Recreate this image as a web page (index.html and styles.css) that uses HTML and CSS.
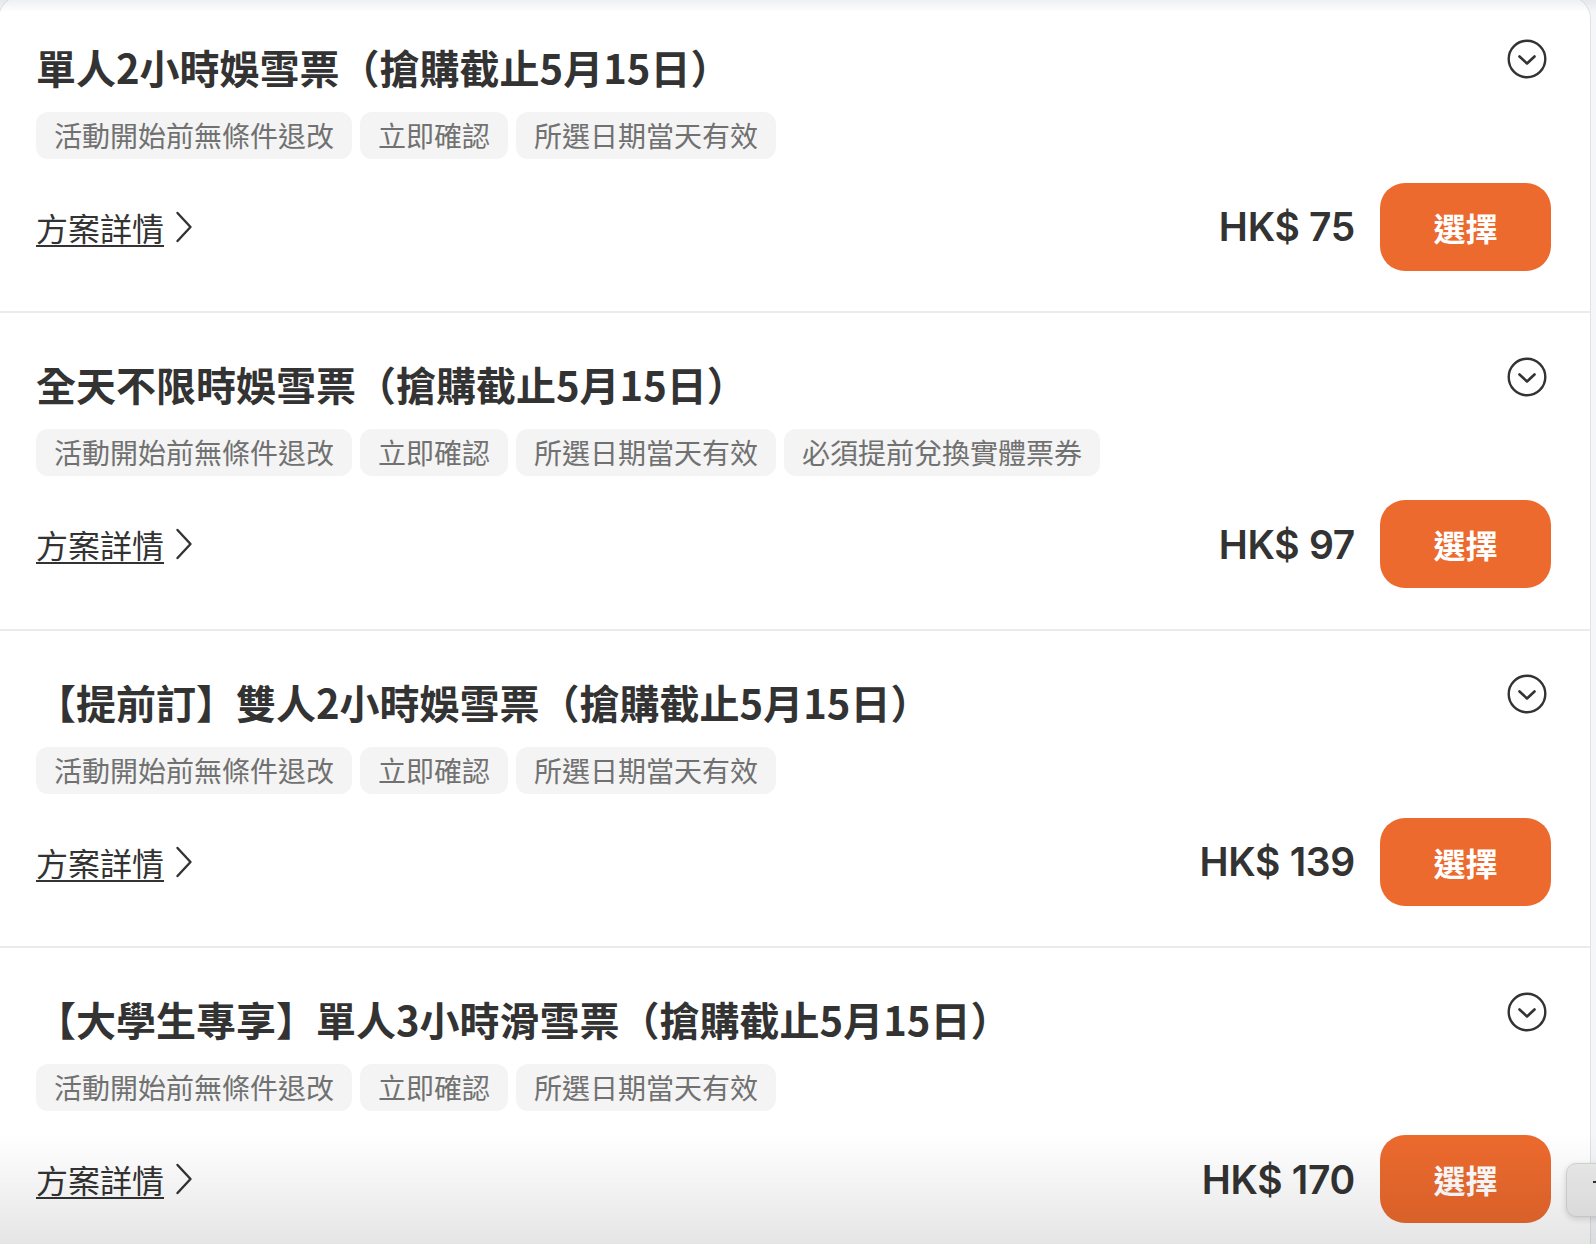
FILE: index.html
```html
<!DOCTYPE html>
<html lang="zh-Hant">
<head>
<meta charset="utf-8">
<title>方案</title>
<link rel="stylesheet" href="styles.css">
</head>
<body>
<div class="top-shade"></div>
<div class="card">
  <div class="pkg">
    <div class="pkg-head">
      <h2 class="pkg-title">單人2小時娛雪票（搶購截止5月15日）</h2>
      <svg class="pkg-toggle" viewBox="0 0 40 40" width="40" height="40"><circle cx="20" cy="20" r="18.3" fill="none" stroke="#333" stroke-width="2.4"/><path d="M12.5 17.5 L20 24.5 L27.5 17.5" fill="none" stroke="#333" stroke-width="2.6" stroke-linecap="round" stroke-linejoin="round"/></svg>
    </div>
    <div class="tags">
      <span class="tag">活動開始前無條件退改</span>
      <span class="tag">立即確認</span>
      <span class="tag">所選日期當天有效</span>
    </div>
    <div class="pkg-foot">
      <a class="details" href="#"><span class="details-text">方案詳情</span><svg class="details-arrow" viewBox="0 0 20 32" width="20" height="32"><path d="M3.5 2 L16.5 16 L3.5 30" fill="none" stroke="#333" stroke-width="2.4" stroke-linecap="round" stroke-linejoin="round"/></svg></a>
      <div class="buy">
        <span class="price">HK$ 75</span>
        <button class="select">選擇</button>
      </div>
    </div>
  </div>

  <div class="pkg">
    <div class="pkg-head">
      <h2 class="pkg-title">全天不限時娛雪票（搶購截止5月15日）</h2>
      <svg class="pkg-toggle" viewBox="0 0 40 40" width="40" height="40"><circle cx="20" cy="20" r="18.3" fill="none" stroke="#333" stroke-width="2.4"/><path d="M12.5 17.5 L20 24.5 L27.5 17.5" fill="none" stroke="#333" stroke-width="2.6" stroke-linecap="round" stroke-linejoin="round"/></svg>
    </div>
    <div class="tags">
      <span class="tag">活動開始前無條件退改</span>
      <span class="tag">立即確認</span>
      <span class="tag">所選日期當天有效</span>
      <span class="tag">必須提前兌換實體票券</span>
    </div>
    <div class="pkg-foot">
      <a class="details" href="#"><span class="details-text">方案詳情</span><svg class="details-arrow" viewBox="0 0 20 32" width="20" height="32"><path d="M3.5 2 L16.5 16 L3.5 30" fill="none" stroke="#333" stroke-width="2.4" stroke-linecap="round" stroke-linejoin="round"/></svg></a>
      <div class="buy">
        <span class="price">HK$ 97</span>
        <button class="select">選擇</button>
      </div>
    </div>
  </div>

  <div class="pkg">
    <div class="pkg-head">
      <h2 class="pkg-title">【提前訂】雙人2小時娛雪票（搶購截止5月15日）</h2>
      <svg class="pkg-toggle" viewBox="0 0 40 40" width="40" height="40"><circle cx="20" cy="20" r="18.3" fill="none" stroke="#333" stroke-width="2.4"/><path d="M12.5 17.5 L20 24.5 L27.5 17.5" fill="none" stroke="#333" stroke-width="2.6" stroke-linecap="round" stroke-linejoin="round"/></svg>
    </div>
    <div class="tags">
      <span class="tag">活動開始前無條件退改</span>
      <span class="tag">立即確認</span>
      <span class="tag">所選日期當天有效</span>
    </div>
    <div class="pkg-foot">
      <a class="details" href="#"><span class="details-text">方案詳情</span><svg class="details-arrow" viewBox="0 0 20 32" width="20" height="32"><path d="M3.5 2 L16.5 16 L3.5 30" fill="none" stroke="#333" stroke-width="2.4" stroke-linecap="round" stroke-linejoin="round"/></svg></a>
      <div class="buy">
        <span class="price">HK$ 139</span>
        <button class="select">選擇</button>
      </div>
    </div>
  </div>

  <div class="pkg">
    <div class="pkg-head">
      <h2 class="pkg-title">【大學生專享】單人3小時滑雪票（搶購截止5月15日）</h2>
      <svg class="pkg-toggle" viewBox="0 0 40 40" width="40" height="40"><circle cx="20" cy="20" r="18.3" fill="none" stroke="#333" stroke-width="2.4"/><path d="M12.5 17.5 L20 24.5 L27.5 17.5" fill="none" stroke="#333" stroke-width="2.6" stroke-linecap="round" stroke-linejoin="round"/></svg>
    </div>
    <div class="tags">
      <span class="tag">活動開始前無條件退改</span>
      <span class="tag">立即確認</span>
      <span class="tag">所選日期當天有效</span>
    </div>
    <div class="pkg-foot">
      <a class="details" href="#"><span class="details-text">方案詳情</span><svg class="details-arrow" viewBox="0 0 20 32" width="20" height="32"><path d="M3.5 2 L16.5 16 L3.5 30" fill="none" stroke="#333" stroke-width="2.4" stroke-linecap="round" stroke-linejoin="round"/></svg></a>
      <div class="buy">
        <span class="price">HK$ 170</span>
        <button class="select">選擇</button>
      </div>
    </div>
  </div>
</div>
<div class="float-btn"><span class="float-mark"></span></div>
<div class="bottom-fade"></div>
</body>
</html>
```

FILE: styles.css
```css
html, body {
  margin: 0;
  height: 1244px;
  overflow: hidden;
}

body {
  background: #f4f6f9;
  font-family: "Noto Sans CJK TC", "Noto Sans", sans-serif;
  color: #333;
}

.top-shade {
  position: fixed;
  left: 0;
  top: 0;
  width: 100%;
  height: 12px;
  background: linear-gradient(rgba(120, 130, 150, 0.12), rgba(120, 130, 150, 0));
  z-index: 5;
}

.card {
  margin: -5.5px 5px 0 -2px;
  background: #fff;
  border: 1px solid #e2e2e2;
  border-radius: 24px;
  overflow: hidden;
}

.pkg {
  padding: 43px 39px 40.5px 37px;
  border-bottom: 2px solid #ebebeb;
}

.pkg-head {
  display: flex;
  justify-content: space-between;
  align-items: flex-start;
}

.pkg-title {
  margin: 0;
  font-size: 40px;
  line-height: 56px;
  font-weight: 700;
  color: #333;
  white-space: nowrap;
}

.pkg-toggle {
  flex: none;
  margin: 0.5px 4px 0 0;
}

.tags {
  display: flex;
  gap: 8px;
  margin-top: 17px;
}

.tag {
  height: 47px;
  line-height: 47px;
  padding: 0 18px;
  background: #f4f4f4;
  border-radius: 12px;
  font-size: 28px;
  color: #717171;
  white-space: nowrap;
}

.pkg-foot {
  display: flex;
  justify-content: space-between;
  align-items: center;
  margin-top: 24px;
}

.details {
  display: flex;
  align-items: center;
  color: #333;
  text-decoration: none;
}

.details-text {
  font-size: 32px;
  line-height: 40px;
  text-decoration: underline;
  text-decoration-thickness: 2px;
  text-underline-offset: 4px;
}

.details-arrow {
  margin-left: 10px;
}

.buy {
  display: flex;
  align-items: center;
  gap: 25px;
}

.price {
  font-family: Inter, "Liberation Sans", sans-serif;
  font-size: 39px;
  font-weight: 600;
  color: #333;
  letter-spacing: -0.3px;
}

.select {
  width: 171px;
  height: 88px;
  border: none;
  border-radius: 25px;
  background: #ec6a2e;
  color: #fff;
  font-family: "Noto Sans CJK TC", sans-serif;
  font-size: 32px;
  font-weight: 700;
  padding: 0;
}

.float-btn {
  position: fixed;
  left: 1566px;
  top: 1163px;
  width: 80px;
  height: 52px;
  background: #ececec;
  border: 1px solid #d6d6d6;
  border-radius: 10px;
  box-shadow: 0 2px 6px rgba(0, 0, 0, 0.15);
  z-index: 6;
}

.float-mark {
  position: absolute;
  left: 26px;
  top: 17px;
  width: 8px;
  height: 2px;
  background: #333;
}

.bottom-fade {
  position: fixed;
  left: 0;
  bottom: 0;
  width: 100%;
  height: 110px;
  background: linear-gradient(rgba(0, 0, 0, 0), rgba(0, 0, 0, 0.1));
  z-index: 7;
  pointer-events: none;
}
```
